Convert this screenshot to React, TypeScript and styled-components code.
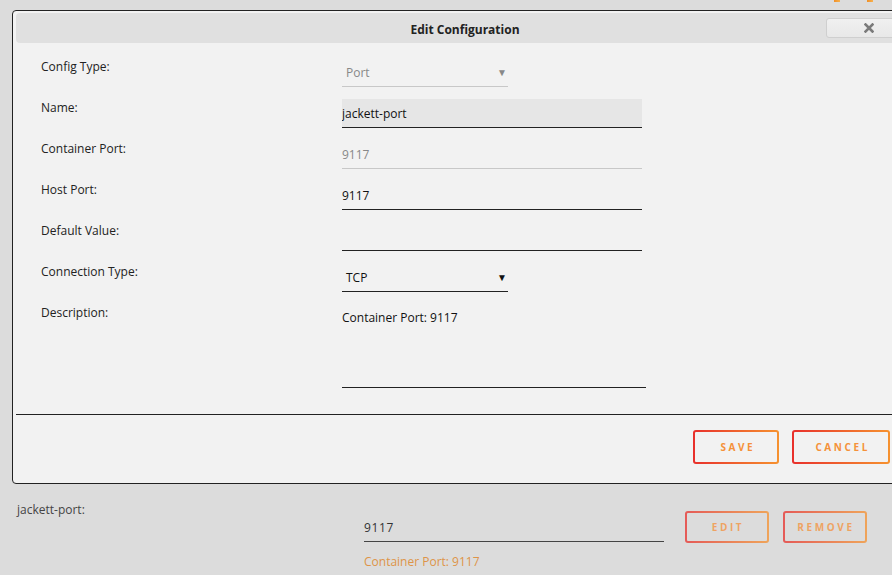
import React from "react";
import styled, { createGlobalStyle } from "styled-components";

const GlobalStyle = createGlobalStyle`
  body {
    margin: 0;
    background: #dcdcdc;
    overflow: hidden;
    font-family: "Open Sans", "Noto Sans", Arial, sans-serif;
    color: #222;
  }
`;

const Page = styled.div`
  padding-left: 12px;
`;

const TopStrip = styled.div`
  height: 10px;
  display: flex;
  gap: 27px;
  padding-left: 822px;
`;

const Mark = styled.div`
  width: 6px;
  height: 2px;
  background: linear-gradient(90deg, #f08f26, #f7b14e);
`;

const Dialog = styled.div`
  width: 906px;
  box-sizing: border-box;
  border: 1px solid #222;
  border-radius: 4px;
  background: #f2f2f2;
  padding: 2px 3px;
`;

const TitleBar = styled.div`
  height: 30px;
  background: #e0e0e0;
  border-radius: 4px;
  display: grid;
  grid-template-columns: 1fr auto 1fr;
  align-items: center;
`;

const Title = styled.div`
  font-size: 12px;
  font-weight: 700;
  color: #222;
  grid-column: 2;
  padding-top: 2px;
`;

const CloseButton = styled.button`
  grid-column: 3;
  justify-self: end;
  margin-right: 2px;
  width: 86px;
  height: 20px;
  box-sizing: border-box;
  border: 1px solid #cfcfcf;
  border-radius: 3px;
  background: linear-gradient(#f0f0f0, #e8e8e8);
  display: flex;
  align-items: center;
  justify-content: center;
  padding: 0;
`;

const Body = styled.div`
  padding: 15px 0 26px 25px;
  display: flex;
  flex-direction: column;
  gap: 12px;
`;

const Row = styled.div`
  display: grid;
  grid-template-columns: 301px auto;
  align-items: start;
`;

const Label = styled.div`
  font-size: 12px;
  line-height: 16px;
  padding-top: 1px;
  color: #222;
`;

const TextInput = styled.input<{ $filled?: boolean; $muted?: boolean }>`
  width: 300px;
  height: 29px;
  box-sizing: border-box;
  border: none;
  border-bottom: 1px solid ${(p) => (p.$muted ? "#c8c8c8" : "#222")};
  background: ${(p) => (p.$filled ? "#e6e6e6" : "transparent")};
  font-family: inherit;
  font-size: 12px;
  color: ${(p) => (p.$muted ? "#888" : "#111")};
  padding: 0;
  outline: none;
`;

const SelectBox = styled.div<{ $muted?: boolean }>`
  width: 166px;
  height: 29px;
  box-sizing: border-box;
  border-bottom: 1px solid ${(p) => (p.$muted ? "#c8c8c8" : "#222")};
  display: flex;
  align-items: center;
  justify-content: space-between;
  padding: 0 1px 0 4px;
  font-size: 12px;
  color: ${(p) => (p.$muted ? "#888" : "#111")};
`;

const Arrow = styled.span`
  font-size: 10px;
  line-height: 1;
  margin-top: -1px;
`;

const TextArea = styled.textarea`
  width: 304px;
  height: 84px;
  box-sizing: border-box;
  border: none;
  border-bottom: 1px solid #222;
  background: transparent;
  resize: none;
  font-family: inherit;
  font-size: 12px;
  color: #111;
  padding: 5px 0 0;
  outline: none;
`;

const Footer = styled.div`
  border-top: 1px solid #222;
  padding: 15px 24px 17px 0;
  display: flex;
  justify-content: flex-end;
  gap: 13px;
`;

const GradientButton = styled.button<{ $bg: string; $faded?: boolean }>`
  height: ${(p) => (p.$faded ? "32px" : "34px")};
  min-width: ${(p) => (p.$faded ? "84px" : "86px")};
  box-sizing: border-box;
  border: 2px solid transparent;
  border-radius: 3px;
  background: linear-gradient(${(p) => p.$bg}, ${(p) => p.$bg}) padding-box,
    linear-gradient(90deg, #e8302c, #f6922f) border-box;
  color: #f5913a;
  font-family: "Open Sans", "Noto Sans", sans-serif;
  font-size: 10px;
  font-weight: 700;
  letter-spacing: 2.6px;
  padding: 0 ${(p) => (p.$faded ? "10px" : "18px")};
  padding-left: ${(p) => (p.$faded ? "12px" : "21px")};
  opacity: ${(p) => (p.$faded ? 0.75 : 1)};
`;

const EntryRow = styled.div`
  display: flex;
  align-items: flex-start;
  padding: 18px 0 0 5px;
`;

const EntryLabel = styled.div`
  width: 347px;
  flex-shrink: 0;
  font-size: 12px;
  line-height: 16px;
  color: #444;
`;

const EntryField = styled.div`
  width: 300px;
  flex-shrink: 0;
  margin-top: 11px;
  display: flex;
  flex-direction: column;
  gap: 12px;
`;

const EntryValue = styled.div`
  height: 29px;
  box-sizing: border-box;
  border-bottom: 1px solid #444;
  display: flex;
  align-items: center;
  font-size: 12px;
  letter-spacing: 0.6px;
  color: #333;
`;

const Helper = styled.div`
  font-size: 12px;
  color: #de9448;
  margin-top: -1px;
`;

const EntryActions = styled.div`
  display: flex;
  flex-shrink: 0;
  gap: 14px;
  margin: 9px 0 0 21px;
`;

const CloseIcon = () => (
  <svg width="10" height="10" viewBox="0 0 10 10">
    <path
      d="M1.5 1.5 L8.5 8.5 M8.5 1.5 L1.5 8.5"
      stroke="#7a7a7a"
      strokeWidth="2.6"
      strokeLinecap="square"
    />
  </svg>
);

const fields = [
  { label: "Name:", value: "jackett-port", filled: true },
  { label: "Container Port:", value: "9117", muted: true },
  { label: "Host Port:", value: "9117" },
  { label: "Default Value:", value: "" },
];

export default function App() {
  return (
    <Page>
      <GlobalStyle />
      <TopStrip>
        <Mark />
        <Mark />
      </TopStrip>
      <Dialog>
        <TitleBar>
          <Title>Edit Configuration</Title>
          <CloseButton aria-label="close">
            <CloseIcon />
          </CloseButton>
        </TitleBar>
        <Body>
          <Row>
            <Label>Config Type:</Label>
            <SelectBox $muted>
              <span>Port</span>
              <Arrow>▼</Arrow>
            </SelectBox>
          </Row>
          {fields.map((f) => (
            <Row key={f.label}>
              <Label>{f.label}</Label>
              <TextInput
                readOnly
                value={f.value}
                $filled={f.filled}
                $muted={f.muted}
              />
            </Row>
          ))}
          <Row>
            <Label>Connection Type:</Label>
            <SelectBox>
              <span>TCP</span>
              <Arrow>▼</Arrow>
            </SelectBox>
          </Row>
          <Row>
            <Label>Description:</Label>
            <TextArea readOnly value="Container Port: 9117" />
          </Row>
        </Body>
        <Footer>
          <GradientButton $bg="#f2f2f2">SAVE</GradientButton>
          <GradientButton $bg="#f2f2f2">CANCEL</GradientButton>
        </Footer>
      </Dialog>
      <EntryRow>
        <EntryLabel>jackett-port:</EntryLabel>
        <EntryField>
          <EntryValue>9117</EntryValue>
          <Helper>Container Port: 9117</Helper>
        </EntryField>
        <EntryActions>
          <GradientButton $bg="#dcdcdc" $faded>
            EDIT
          </GradientButton>
          <GradientButton $bg="#dcdcdc" $faded>
            REMOVE
          </GradientButton>
        </EntryActions>
      </EntryRow>
    </Page>
  );
}
